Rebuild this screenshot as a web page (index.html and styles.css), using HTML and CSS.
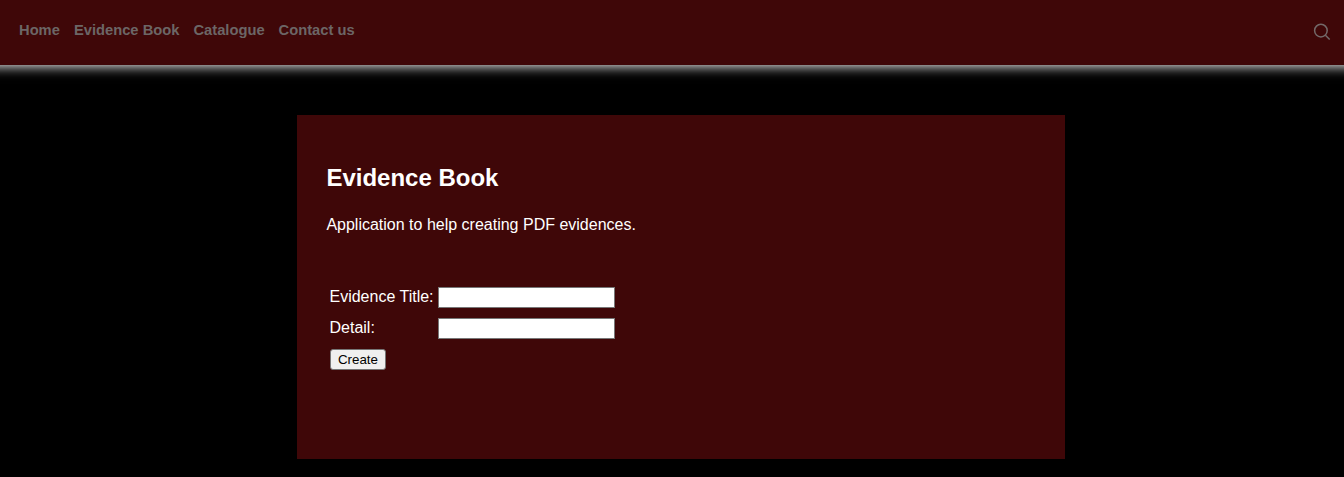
FILE: index.html
```html
<!DOCTYPE html>
<html lang="en">
<head>
<meta charset="utf-8">
<title>Evidence Book</title>
<link rel="stylesheet" href="styles.css">
</head>
<body>
<header class="header">
  <nav class="nav">
    <a class="nav-link">Home</a>
    <a class="nav-link">Evidence Book</a>
    <a class="nav-link">Catalogue</a>
    <a class="nav-link">Contact us</a>
  </nav>
  <svg class="search" viewBox="0 0 18 18" aria-label="Search">
    <circle cx="7.9" cy="7.6" r="6.3"/>
    <path d="M12.4 12.2 16.7 16.5"/>
  </svg>
</header>
<main class="panel">
  <h2 class="title">Evidence Book</h2>
  <p class="intro">Application to help creating PDF evidences.</p>
  <form class="form">
    <label class="label" for="title">Evidence Title:</label>
    <input class="field" id="title" type="text">
    <label class="label" for="detail">Detail:</label>
    <input class="field" id="detail" type="text">
    <button class="create" type="button">Create</button>
  </form>
</main>
</body>
</html>
```
FILE: styles.css
```css
* { box-sizing: border-box; }
body {
  margin: 0;
  background: #000;
  color: #fff;
  font: 16px/18px "Liberation Sans", Arial, sans-serif;
  overflow: hidden;
}
.header {
  display: flex;
  justify-content: space-between;
  align-items: flex-start;
  height: 65px;
  padding: 21px 13px 0 19px;
  background: #3f0708;
  box-shadow: 0 -19px 12px 20px #fff;
}
.nav { display: flex; gap: 14px; }
.nav-link { color: #6c6666; font-size: 14.72px; font-weight: bold; }
.search {
  width: 18px;
  height: 18px;
  margin-top: 2px;
  fill: none;
  stroke: #736969;
  stroke-width: 1.5;
}
.panel {
  width: 768px;
  height: 344px;
  margin: 50px 0 0 297px;
  padding: 49px 29px 0 29.4px;
  background: #3f0708;
}
.title { margin: 0; font-size: 24px; line-height: 28px; }
.intro { margin: 24px 0 0; }
.form {
  display: grid;
  grid-template-columns: 104px 177px;
  grid-template-rows: repeat(3, 21px);
  gap: 10px 4px;
  margin: 53px 0 0 3.6px;
}
.label { padding-top: 1px; margin-left: -0.5px; white-space: nowrap; }
.field {
  width: 177px;
  height: 21px;
  padding: 1px 2px;
  border: 1px solid #767676;
  background: #fff;
}
.create {
  width: 56px;
  height: 21px;
  padding: 0;
  border: 1px solid #767676;
  border-radius: 3px;
  background: #efefef;
  color: #000;
  font: 13.333px/15px "Liberation Sans", Arial, sans-serif;
}
```
